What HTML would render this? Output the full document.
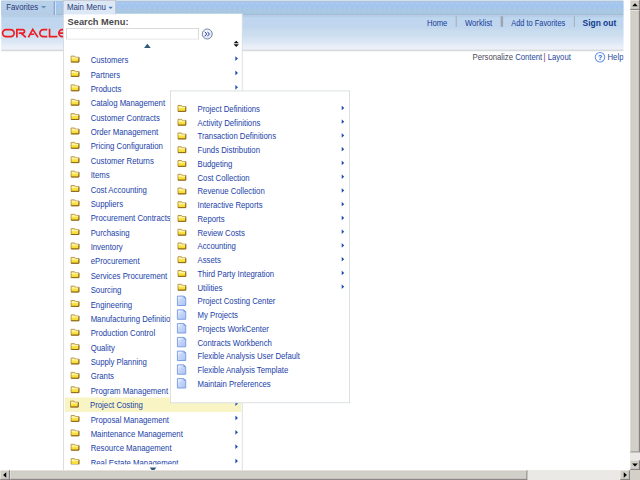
<!DOCTYPE html>
<html><head><meta charset="utf-8"><style>
html,body{margin:0;padding:0;width:640px;height:480px;overflow:hidden;background:#fff;}
#s{position:absolute;left:0;top:0;width:1024px;height:768px;transform:scale(0.625);transform-origin:0 0;overflow:hidden;background:#fff;font-family:"Liberation Sans",sans-serif;}
.a{position:absolute;}
.t{position:absolute;white-space:nowrap;}
.sb{position:absolute;background:#d0d0c8;box-shadow:inset -1px -1px 0 #787070, inset 1px 1px 0 #f4ecec, inset -2px -2px 0 #a49c9c, inset 2px 2px 0 #c8c0b4;}
</style></head><body>
<svg width="0" height="0" style="position:absolute"><defs><linearGradient id="fg" x1="0" y1="0" x2="0" y2="1"><stop offset="0" stop-color="#fff8b0"/><stop offset="0.5" stop-color="#fae640"/><stop offset="1" stop-color="#f2d830"/></linearGradient><linearGradient id="dg" x1="0" y1="0" x2="1" y2="1"><stop offset="0" stop-color="#ffffff"/><stop offset="0.45" stop-color="#c8d8f8"/><stop offset="1" stop-color="#a8c0f0"/></linearGradient><radialGradient id="bg1" cx="0.4" cy="0.35" r="0.7"><stop offset="0" stop-color="#ffffff"/><stop offset="1" stop-color="#d8e4f4"/></radialGradient></defs></svg>
<div id="s">
<div class="a" style="left:2.00px;top:0.00px;width:996.00px;height:24.50px;background:linear-gradient(#d0e0ee 0,#d0e0ee 1.8px,#b2c4d8 1.8px,#a8c4e6 3.5px,#a2c6f0 5px,#a4c6ee 12px,#a8c8e2 15px,#a8c8e2 23px,#a0bcd8 23px)"></div>
<div class="a" style="left:2.00px;top:24.50px;width:996.00px;height:57.50px;background:linear-gradient(#a8c2dc 0,#b8d0ea 1.6px,#bed6ee 4px,#c0d6ee 18px,#c8dcee 24px,#cddfef 32px,#d8e4f4 38px,#dee8f5 44px,#e8eef8 48px,#ecf1f9 53px,#e2e6ea 54.5px,#d6dadd 55.5px,#d6dadd 57.5px)"></div>
<div class="a" style="left:2.00px;top:4.60px;width:996.00px;height:1.80px;background:repeating-linear-gradient(90deg,#b2d0f0 0 5px,#a6c4ea 5px 8px)"></div>
<div class="a" style="left:2.00px;top:9.60px;width:996.00px;height:2.00px;background:repeating-linear-gradient(90deg,#a6bcec 0 3px,#a4c8f0 3px 8px)"></div>
<div class="a" style="left:2.00px;top:15.40px;width:996.00px;height:2.00px;background:repeating-linear-gradient(90deg,#a8c0e4 0 3px,#accae4 3px 8px)"></div>
<div class="a" style="left:2.00px;top:1.80px;width:84.00px;height:22.20px;background:linear-gradient(#bad2ea,#b4cce6)"></div>
<div class="a" style="left:86.00px;top:2.00px;width:1.60px;height:22.00px;background:#86a8d2"></div>
<div class="a" style="left:87.60px;top:2.00px;width:1.60px;height:22.00px;background:#eef4fa"></div>
<div class="t" style="left:10.00px;top:5.23px;font-size:13.2px;line-height:13.2px;color:#2a3a78;font-weight:normal;transform:scaleX(0.94);transform-origin:0 0;">Favorites</div>
<svg class="a" style="left:64px;top:8px" width="12" height="8"><path d="M1.5 1.5 L10 1.5 L5.75 5.5 Z" fill="#6692c2"/></svg>
<svg class="a" style="left:0;top:0" width="110" height="70"><g fill="none" stroke="#ee1c25" stroke-width="2.7">
<path d="M9.8 47.3 H17 A5.7 5.7 0 0 1 17 58.7 H9.8 A5.7 5.7 0 0 1 9.8 47.3 Z"/>
<path d="M27 60 V47.3 H36.4 A2.85 2.85 0 0 1 36.4 53 H30 M33.8 53 L41.4 59.8"/>
<path d="M45.4 59.8 L52.4 47 L60.8 59.8 M49.2 54.8 H54.6"/>
<path d="M75.6 47.3 H69.4 A5.7 5.7 0 0 0 69.4 58.7 H75.6"/>
<path d="M79.3 46 V58.7 H91.8"/>
<path d="M104 47.3 H99.8 A5.7 5.7 0 0 0 99.8 58.7 H104 M95 53 H104"/></g></svg>
<div class="t" style="left:683.00px;top:30.63px;font-size:13.2px;line-height:13.2px;color:#163c98;font-weight:normal;transform:scaleX(0.93);transform-origin:0 0;">Home</div>
<div class="a" style="left:729.00px;top:26.00px;width:2.00px;height:17.00px;background:#a8b4c4"></div>
<div class="t" style="left:743.50px;top:30.63px;font-size:13.2px;line-height:13.2px;color:#163c98;font-weight:normal;transform:scaleX(0.93);transform-origin:0 0;">Worklist</div>
<div class="a" style="left:801.00px;top:26.00px;width:3.60px;height:17.00px;background:#a0a4b0"></div>
<div class="t" style="left:818.00px;top:30.63px;font-size:13.2px;line-height:13.2px;color:#163c98;font-weight:normal;transform:scaleX(0.9);transform-origin:0 0;">Add to Favorites</div>
<div class="a" style="left:918.00px;top:26.00px;width:2.00px;height:17.00px;background:#a8b4c4"></div>
<div class="t" style="left:932.00px;top:30.37px;font-size:13.5px;line-height:13.5px;color:#0f3a8c;font-weight:bold;">Sign out</div>
<div class="t" style="left:756.00px;top:85.03px;font-size:13.2px;line-height:13.2px;color:#4a4a5a;font-weight:normal;transform:scaleX(0.94);transform-origin:0 0;">Personalize <span style="color:#26489a">Content</span> <span style="color:#8a3050;margin-left:-1.7px">|</span> <span style="color:#26489a">Layout</span></div>
<svg class="a" style="left:950px;top:82px" width="20" height="20"><circle cx="10" cy="9.6" r="7.6" fill="#f8fbff" stroke="#6a94e4" stroke-width="1.7"/><text x="10" y="14" text-anchor="middle" font-size="11" font-weight="bold" fill="#2a5ec8" font-family="Liberation Sans">?</text></svg>
<div class="t" style="left:972.00px;top:85.03px;font-size:13.2px;line-height:13.2px;color:#26489a;font-weight:normal;transform:scaleX(0.94);transform-origin:0 0;">Help</div>
<div class="a" style="left:101.00px;top:22.00px;width:287.00px;height:760.00px;background:#fff;border-left:1.6px solid #c2c8ce;border-right:1.6px solid #c8d0d4;box-sizing:border-box"></div>
<div class="a" style="left:101.00px;top:0.00px;width:84.00px;height:23.00px;background:#dce8f6;border:1.6px solid #bdbcc4;border-bottom:none;box-sizing:border-box"></div>
<div class="t" style="left:107.20px;top:5.23px;font-size:13.2px;line-height:13.2px;color:#2a3a78;font-weight:normal;transform:scaleX(0.96);transform-origin:0 0;">Main Menu</div>
<svg class="a" style="left:173px;top:10px" width="10" height="6"><path d="M0.5 0.8 L7.5 0.8 L4 4.5 Z" fill="#3a72c0"/></svg>
<div class="t" style="left:107.80px;top:26.88px;font-size:15.5px;line-height:15.5px;color:#4a4a4a;font-weight:bold;transform:scaleX(0.96);transform-origin:0 0;">Search Menu:</div>
<div class="a" style="left:105.60px;top:44.80px;width:212.00px;height:18.40px;border:1.6px solid #c4c4c4;border-bottom-color:#d8d8d8;box-sizing:border-box;background:#fff"></div>
<svg class="a" style="left:320px;top:42px" width="24" height="24"><circle cx="11.6" cy="12.4" r="8" fill="url(#bg1)" stroke="#7a86a0" stroke-width="1.6"/><path d="M7.6 8.8 L10.8 12.4 L7.6 16 M11.8 8.8 L15 12.4 L11.8 16" fill="none" stroke="#2a3aa8" stroke-width="1.6"/></svg>
<svg class="a" style="left:372px;top:64px" width="12" height="13"><path d="M1.8 5.2 L6 1 L10.2 5.2 Z M1.8 6.8 L6 11 L10.2 6.8 Z" fill="#111"/></svg>
<svg class="a" style="left:229px;top:68px" width="14" height="10"><path d="M1.5 8.6 L6.8 1.8 L12.2 8.6 Z" fill="#2e5a78"/></svg>
<svg class="a" style="left:112.00px;top:88.00px" width="16" height="13" viewBox="0 0 16 13"><path d="M1.8 1.8 H7.4 L8.4 3.6 H14.2 V11.2 H1.8 Z" fill="url(#fg)" stroke="#b89040" stroke-width="1.5" stroke-linejoin="round"/><path d="M14.2 3.6 V11.2 H1.8" fill="none" stroke="#8a6418" stroke-width="1.5" stroke-linejoin="round"/><path d="M2.6 4.8 H13.4" stroke="#fffce0" stroke-width="1.1"/></svg>
<div class="t" style="left:145.40px;top:89.78px;font-size:13.2px;line-height:13.2px;color:#1a42a8;font-weight:normal;transform:scaleX(0.945);transform-origin:0 0;">Customers</div>
<svg class="a" style="left:375.50px;top:89.40px" width="6" height="10"><path d="M0.6 0.8 L4.7 4.6 L0.6 8.4 Z" fill="#1a4cac"/></svg>
<svg class="a" style="left:112.00px;top:111.00px" width="16" height="13" viewBox="0 0 16 13"><path d="M1.8 1.8 H7.4 L8.4 3.6 H14.2 V11.2 H1.8 Z" fill="url(#fg)" stroke="#b89040" stroke-width="1.5" stroke-linejoin="round"/><path d="M14.2 3.6 V11.2 H1.8" fill="none" stroke="#8a6418" stroke-width="1.5" stroke-linejoin="round"/><path d="M2.6 4.8 H13.4" stroke="#fffce0" stroke-width="1.1"/></svg>
<div class="t" style="left:145.40px;top:112.78px;font-size:13.2px;line-height:13.2px;color:#1a42a8;font-weight:normal;transform:scaleX(0.945);transform-origin:0 0;">Partners</div>
<svg class="a" style="left:375.50px;top:112.40px" width="6" height="10"><path d="M0.6 0.8 L4.7 4.6 L0.6 8.4 Z" fill="#1a4cac"/></svg>
<svg class="a" style="left:112.00px;top:134.00px" width="16" height="13" viewBox="0 0 16 13"><path d="M1.8 1.8 H7.4 L8.4 3.6 H14.2 V11.2 H1.8 Z" fill="url(#fg)" stroke="#b89040" stroke-width="1.5" stroke-linejoin="round"/><path d="M14.2 3.6 V11.2 H1.8" fill="none" stroke="#8a6418" stroke-width="1.5" stroke-linejoin="round"/><path d="M2.6 4.8 H13.4" stroke="#fffce0" stroke-width="1.1"/></svg>
<div class="t" style="left:145.40px;top:135.78px;font-size:13.2px;line-height:13.2px;color:#1a42a8;font-weight:normal;transform:scaleX(0.945);transform-origin:0 0;">Products</div>
<svg class="a" style="left:375.50px;top:135.40px" width="6" height="10"><path d="M0.6 0.8 L4.7 4.6 L0.6 8.4 Z" fill="#1a4cac"/></svg>
<svg class="a" style="left:112.00px;top:157.00px" width="16" height="13" viewBox="0 0 16 13"><path d="M1.8 1.8 H7.4 L8.4 3.6 H14.2 V11.2 H1.8 Z" fill="url(#fg)" stroke="#b89040" stroke-width="1.5" stroke-linejoin="round"/><path d="M14.2 3.6 V11.2 H1.8" fill="none" stroke="#8a6418" stroke-width="1.5" stroke-linejoin="round"/><path d="M2.6 4.8 H13.4" stroke="#fffce0" stroke-width="1.1"/></svg>
<div class="t" style="left:145.40px;top:158.78px;font-size:13.2px;line-height:13.2px;color:#1a42a8;font-weight:normal;transform:scaleX(0.945);transform-origin:0 0;">Catalog Management</div>
<svg class="a" style="left:375.50px;top:158.40px" width="6" height="10"><path d="M0.6 0.8 L4.7 4.6 L0.6 8.4 Z" fill="#1a4cac"/></svg>
<svg class="a" style="left:112.00px;top:180.00px" width="16" height="13" viewBox="0 0 16 13"><path d="M1.8 1.8 H7.4 L8.4 3.6 H14.2 V11.2 H1.8 Z" fill="url(#fg)" stroke="#b89040" stroke-width="1.5" stroke-linejoin="round"/><path d="M14.2 3.6 V11.2 H1.8" fill="none" stroke="#8a6418" stroke-width="1.5" stroke-linejoin="round"/><path d="M2.6 4.8 H13.4" stroke="#fffce0" stroke-width="1.1"/></svg>
<div class="t" style="left:145.40px;top:181.78px;font-size:13.2px;line-height:13.2px;color:#1a42a8;font-weight:normal;transform:scaleX(0.945);transform-origin:0 0;">Customer Contracts</div>
<svg class="a" style="left:375.50px;top:181.40px" width="6" height="10"><path d="M0.6 0.8 L4.7 4.6 L0.6 8.4 Z" fill="#1a4cac"/></svg>
<svg class="a" style="left:112.00px;top:203.00px" width="16" height="13" viewBox="0 0 16 13"><path d="M1.8 1.8 H7.4 L8.4 3.6 H14.2 V11.2 H1.8 Z" fill="url(#fg)" stroke="#b89040" stroke-width="1.5" stroke-linejoin="round"/><path d="M14.2 3.6 V11.2 H1.8" fill="none" stroke="#8a6418" stroke-width="1.5" stroke-linejoin="round"/><path d="M2.6 4.8 H13.4" stroke="#fffce0" stroke-width="1.1"/></svg>
<div class="t" style="left:145.40px;top:204.78px;font-size:13.2px;line-height:13.2px;color:#1a42a8;font-weight:normal;transform:scaleX(0.945);transform-origin:0 0;">Order Management</div>
<svg class="a" style="left:375.50px;top:204.40px" width="6" height="10"><path d="M0.6 0.8 L4.7 4.6 L0.6 8.4 Z" fill="#1a4cac"/></svg>
<svg class="a" style="left:112.00px;top:226.00px" width="16" height="13" viewBox="0 0 16 13"><path d="M1.8 1.8 H7.4 L8.4 3.6 H14.2 V11.2 H1.8 Z" fill="url(#fg)" stroke="#b89040" stroke-width="1.5" stroke-linejoin="round"/><path d="M14.2 3.6 V11.2 H1.8" fill="none" stroke="#8a6418" stroke-width="1.5" stroke-linejoin="round"/><path d="M2.6 4.8 H13.4" stroke="#fffce0" stroke-width="1.1"/></svg>
<div class="t" style="left:145.40px;top:227.78px;font-size:13.2px;line-height:13.2px;color:#1a42a8;font-weight:normal;transform:scaleX(0.945);transform-origin:0 0;">Pricing Configuration</div>
<svg class="a" style="left:375.50px;top:227.40px" width="6" height="10"><path d="M0.6 0.8 L4.7 4.6 L0.6 8.4 Z" fill="#1a4cac"/></svg>
<svg class="a" style="left:112.00px;top:249.00px" width="16" height="13" viewBox="0 0 16 13"><path d="M1.8 1.8 H7.4 L8.4 3.6 H14.2 V11.2 H1.8 Z" fill="url(#fg)" stroke="#b89040" stroke-width="1.5" stroke-linejoin="round"/><path d="M14.2 3.6 V11.2 H1.8" fill="none" stroke="#8a6418" stroke-width="1.5" stroke-linejoin="round"/><path d="M2.6 4.8 H13.4" stroke="#fffce0" stroke-width="1.1"/></svg>
<div class="t" style="left:145.40px;top:250.78px;font-size:13.2px;line-height:13.2px;color:#1a42a8;font-weight:normal;transform:scaleX(0.945);transform-origin:0 0;">Customer Returns</div>
<svg class="a" style="left:375.50px;top:250.40px" width="6" height="10"><path d="M0.6 0.8 L4.7 4.6 L0.6 8.4 Z" fill="#1a4cac"/></svg>
<svg class="a" style="left:112.00px;top:272.00px" width="16" height="13" viewBox="0 0 16 13"><path d="M1.8 1.8 H7.4 L8.4 3.6 H14.2 V11.2 H1.8 Z" fill="url(#fg)" stroke="#b89040" stroke-width="1.5" stroke-linejoin="round"/><path d="M14.2 3.6 V11.2 H1.8" fill="none" stroke="#8a6418" stroke-width="1.5" stroke-linejoin="round"/><path d="M2.6 4.8 H13.4" stroke="#fffce0" stroke-width="1.1"/></svg>
<div class="t" style="left:145.40px;top:273.78px;font-size:13.2px;line-height:13.2px;color:#1a42a8;font-weight:normal;transform:scaleX(0.945);transform-origin:0 0;">Items</div>
<svg class="a" style="left:375.50px;top:273.40px" width="6" height="10"><path d="M0.6 0.8 L4.7 4.6 L0.6 8.4 Z" fill="#1a4cac"/></svg>
<svg class="a" style="left:112.00px;top:295.00px" width="16" height="13" viewBox="0 0 16 13"><path d="M1.8 1.8 H7.4 L8.4 3.6 H14.2 V11.2 H1.8 Z" fill="url(#fg)" stroke="#b89040" stroke-width="1.5" stroke-linejoin="round"/><path d="M14.2 3.6 V11.2 H1.8" fill="none" stroke="#8a6418" stroke-width="1.5" stroke-linejoin="round"/><path d="M2.6 4.8 H13.4" stroke="#fffce0" stroke-width="1.1"/></svg>
<div class="t" style="left:145.40px;top:296.78px;font-size:13.2px;line-height:13.2px;color:#1a42a8;font-weight:normal;transform:scaleX(0.945);transform-origin:0 0;">Cost Accounting</div>
<svg class="a" style="left:375.50px;top:296.40px" width="6" height="10"><path d="M0.6 0.8 L4.7 4.6 L0.6 8.4 Z" fill="#1a4cac"/></svg>
<svg class="a" style="left:112.00px;top:318.00px" width="16" height="13" viewBox="0 0 16 13"><path d="M1.8 1.8 H7.4 L8.4 3.6 H14.2 V11.2 H1.8 Z" fill="url(#fg)" stroke="#b89040" stroke-width="1.5" stroke-linejoin="round"/><path d="M14.2 3.6 V11.2 H1.8" fill="none" stroke="#8a6418" stroke-width="1.5" stroke-linejoin="round"/><path d="M2.6 4.8 H13.4" stroke="#fffce0" stroke-width="1.1"/></svg>
<div class="t" style="left:145.40px;top:319.78px;font-size:13.2px;line-height:13.2px;color:#1a42a8;font-weight:normal;transform:scaleX(0.945);transform-origin:0 0;">Suppliers</div>
<svg class="a" style="left:375.50px;top:319.40px" width="6" height="10"><path d="M0.6 0.8 L4.7 4.6 L0.6 8.4 Z" fill="#1a4cac"/></svg>
<svg class="a" style="left:112.00px;top:341.00px" width="16" height="13" viewBox="0 0 16 13"><path d="M1.8 1.8 H7.4 L8.4 3.6 H14.2 V11.2 H1.8 Z" fill="url(#fg)" stroke="#b89040" stroke-width="1.5" stroke-linejoin="round"/><path d="M14.2 3.6 V11.2 H1.8" fill="none" stroke="#8a6418" stroke-width="1.5" stroke-linejoin="round"/><path d="M2.6 4.8 H13.4" stroke="#fffce0" stroke-width="1.1"/></svg>
<div class="t" style="left:145.40px;top:342.78px;font-size:13.2px;line-height:13.2px;color:#1a42a8;font-weight:normal;transform:scaleX(0.945);transform-origin:0 0;">Procurement Contracts</div>
<svg class="a" style="left:375.50px;top:342.40px" width="6" height="10"><path d="M0.6 0.8 L4.7 4.6 L0.6 8.4 Z" fill="#1a4cac"/></svg>
<svg class="a" style="left:112.00px;top:364.00px" width="16" height="13" viewBox="0 0 16 13"><path d="M1.8 1.8 H7.4 L8.4 3.6 H14.2 V11.2 H1.8 Z" fill="url(#fg)" stroke="#b89040" stroke-width="1.5" stroke-linejoin="round"/><path d="M14.2 3.6 V11.2 H1.8" fill="none" stroke="#8a6418" stroke-width="1.5" stroke-linejoin="round"/><path d="M2.6 4.8 H13.4" stroke="#fffce0" stroke-width="1.1"/></svg>
<div class="t" style="left:145.40px;top:365.78px;font-size:13.2px;line-height:13.2px;color:#1a42a8;font-weight:normal;transform:scaleX(0.945);transform-origin:0 0;">Purchasing</div>
<svg class="a" style="left:375.50px;top:365.40px" width="6" height="10"><path d="M0.6 0.8 L4.7 4.6 L0.6 8.4 Z" fill="#1a4cac"/></svg>
<svg class="a" style="left:112.00px;top:387.00px" width="16" height="13" viewBox="0 0 16 13"><path d="M1.8 1.8 H7.4 L8.4 3.6 H14.2 V11.2 H1.8 Z" fill="url(#fg)" stroke="#b89040" stroke-width="1.5" stroke-linejoin="round"/><path d="M14.2 3.6 V11.2 H1.8" fill="none" stroke="#8a6418" stroke-width="1.5" stroke-linejoin="round"/><path d="M2.6 4.8 H13.4" stroke="#fffce0" stroke-width="1.1"/></svg>
<div class="t" style="left:145.40px;top:388.78px;font-size:13.2px;line-height:13.2px;color:#1a42a8;font-weight:normal;transform:scaleX(0.945);transform-origin:0 0;">Inventory</div>
<svg class="a" style="left:375.50px;top:388.40px" width="6" height="10"><path d="M0.6 0.8 L4.7 4.6 L0.6 8.4 Z" fill="#1a4cac"/></svg>
<svg class="a" style="left:112.00px;top:410.00px" width="16" height="13" viewBox="0 0 16 13"><path d="M1.8 1.8 H7.4 L8.4 3.6 H14.2 V11.2 H1.8 Z" fill="url(#fg)" stroke="#b89040" stroke-width="1.5" stroke-linejoin="round"/><path d="M14.2 3.6 V11.2 H1.8" fill="none" stroke="#8a6418" stroke-width="1.5" stroke-linejoin="round"/><path d="M2.6 4.8 H13.4" stroke="#fffce0" stroke-width="1.1"/></svg>
<div class="t" style="left:145.40px;top:411.78px;font-size:13.2px;line-height:13.2px;color:#1a42a8;font-weight:normal;transform:scaleX(0.945);transform-origin:0 0;">eProcurement</div>
<svg class="a" style="left:375.50px;top:411.40px" width="6" height="10"><path d="M0.6 0.8 L4.7 4.6 L0.6 8.4 Z" fill="#1a4cac"/></svg>
<svg class="a" style="left:112.00px;top:433.00px" width="16" height="13" viewBox="0 0 16 13"><path d="M1.8 1.8 H7.4 L8.4 3.6 H14.2 V11.2 H1.8 Z" fill="url(#fg)" stroke="#b89040" stroke-width="1.5" stroke-linejoin="round"/><path d="M14.2 3.6 V11.2 H1.8" fill="none" stroke="#8a6418" stroke-width="1.5" stroke-linejoin="round"/><path d="M2.6 4.8 H13.4" stroke="#fffce0" stroke-width="1.1"/></svg>
<div class="t" style="left:145.40px;top:434.78px;font-size:13.2px;line-height:13.2px;color:#1a42a8;font-weight:normal;transform:scaleX(0.945);transform-origin:0 0;">Services Procurement</div>
<svg class="a" style="left:375.50px;top:434.40px" width="6" height="10"><path d="M0.6 0.8 L4.7 4.6 L0.6 8.4 Z" fill="#1a4cac"/></svg>
<svg class="a" style="left:112.00px;top:456.00px" width="16" height="13" viewBox="0 0 16 13"><path d="M1.8 1.8 H7.4 L8.4 3.6 H14.2 V11.2 H1.8 Z" fill="url(#fg)" stroke="#b89040" stroke-width="1.5" stroke-linejoin="round"/><path d="M14.2 3.6 V11.2 H1.8" fill="none" stroke="#8a6418" stroke-width="1.5" stroke-linejoin="round"/><path d="M2.6 4.8 H13.4" stroke="#fffce0" stroke-width="1.1"/></svg>
<div class="t" style="left:145.40px;top:457.78px;font-size:13.2px;line-height:13.2px;color:#1a42a8;font-weight:normal;transform:scaleX(0.945);transform-origin:0 0;">Sourcing</div>
<svg class="a" style="left:375.50px;top:457.40px" width="6" height="10"><path d="M0.6 0.8 L4.7 4.6 L0.6 8.4 Z" fill="#1a4cac"/></svg>
<svg class="a" style="left:112.00px;top:479.00px" width="16" height="13" viewBox="0 0 16 13"><path d="M1.8 1.8 H7.4 L8.4 3.6 H14.2 V11.2 H1.8 Z" fill="url(#fg)" stroke="#b89040" stroke-width="1.5" stroke-linejoin="round"/><path d="M14.2 3.6 V11.2 H1.8" fill="none" stroke="#8a6418" stroke-width="1.5" stroke-linejoin="round"/><path d="M2.6 4.8 H13.4" stroke="#fffce0" stroke-width="1.1"/></svg>
<div class="t" style="left:145.40px;top:480.78px;font-size:13.2px;line-height:13.2px;color:#1a42a8;font-weight:normal;transform:scaleX(0.945);transform-origin:0 0;">Engineering</div>
<svg class="a" style="left:375.50px;top:480.40px" width="6" height="10"><path d="M0.6 0.8 L4.7 4.6 L0.6 8.4 Z" fill="#1a4cac"/></svg>
<svg class="a" style="left:112.00px;top:502.00px" width="16" height="13" viewBox="0 0 16 13"><path d="M1.8 1.8 H7.4 L8.4 3.6 H14.2 V11.2 H1.8 Z" fill="url(#fg)" stroke="#b89040" stroke-width="1.5" stroke-linejoin="round"/><path d="M14.2 3.6 V11.2 H1.8" fill="none" stroke="#8a6418" stroke-width="1.5" stroke-linejoin="round"/><path d="M2.6 4.8 H13.4" stroke="#fffce0" stroke-width="1.1"/></svg>
<div class="t" style="left:145.40px;top:503.78px;font-size:13.2px;line-height:13.2px;color:#1a42a8;font-weight:normal;transform:scaleX(0.945);transform-origin:0 0;">Manufacturing Definitions</div>
<svg class="a" style="left:375.50px;top:503.40px" width="6" height="10"><path d="M0.6 0.8 L4.7 4.6 L0.6 8.4 Z" fill="#1a4cac"/></svg>
<svg class="a" style="left:112.00px;top:525.00px" width="16" height="13" viewBox="0 0 16 13"><path d="M1.8 1.8 H7.4 L8.4 3.6 H14.2 V11.2 H1.8 Z" fill="url(#fg)" stroke="#b89040" stroke-width="1.5" stroke-linejoin="round"/><path d="M14.2 3.6 V11.2 H1.8" fill="none" stroke="#8a6418" stroke-width="1.5" stroke-linejoin="round"/><path d="M2.6 4.8 H13.4" stroke="#fffce0" stroke-width="1.1"/></svg>
<div class="t" style="left:145.40px;top:526.78px;font-size:13.2px;line-height:13.2px;color:#1a42a8;font-weight:normal;transform:scaleX(0.945);transform-origin:0 0;">Production Control</div>
<svg class="a" style="left:375.50px;top:526.40px" width="6" height="10"><path d="M0.6 0.8 L4.7 4.6 L0.6 8.4 Z" fill="#1a4cac"/></svg>
<svg class="a" style="left:112.00px;top:548.00px" width="16" height="13" viewBox="0 0 16 13"><path d="M1.8 1.8 H7.4 L8.4 3.6 H14.2 V11.2 H1.8 Z" fill="url(#fg)" stroke="#b89040" stroke-width="1.5" stroke-linejoin="round"/><path d="M14.2 3.6 V11.2 H1.8" fill="none" stroke="#8a6418" stroke-width="1.5" stroke-linejoin="round"/><path d="M2.6 4.8 H13.4" stroke="#fffce0" stroke-width="1.1"/></svg>
<div class="t" style="left:145.40px;top:549.78px;font-size:13.2px;line-height:13.2px;color:#1a42a8;font-weight:normal;transform:scaleX(0.945);transform-origin:0 0;">Quality</div>
<svg class="a" style="left:375.50px;top:549.40px" width="6" height="10"><path d="M0.6 0.8 L4.7 4.6 L0.6 8.4 Z" fill="#1a4cac"/></svg>
<svg class="a" style="left:112.00px;top:571.00px" width="16" height="13" viewBox="0 0 16 13"><path d="M1.8 1.8 H7.4 L8.4 3.6 H14.2 V11.2 H1.8 Z" fill="url(#fg)" stroke="#b89040" stroke-width="1.5" stroke-linejoin="round"/><path d="M14.2 3.6 V11.2 H1.8" fill="none" stroke="#8a6418" stroke-width="1.5" stroke-linejoin="round"/><path d="M2.6 4.8 H13.4" stroke="#fffce0" stroke-width="1.1"/></svg>
<div class="t" style="left:145.40px;top:572.78px;font-size:13.2px;line-height:13.2px;color:#1a42a8;font-weight:normal;transform:scaleX(0.945);transform-origin:0 0;">Supply Planning</div>
<svg class="a" style="left:375.50px;top:572.40px" width="6" height="10"><path d="M0.6 0.8 L4.7 4.6 L0.6 8.4 Z" fill="#1a4cac"/></svg>
<svg class="a" style="left:112.00px;top:594.00px" width="16" height="13" viewBox="0 0 16 13"><path d="M1.8 1.8 H7.4 L8.4 3.6 H14.2 V11.2 H1.8 Z" fill="url(#fg)" stroke="#b89040" stroke-width="1.5" stroke-linejoin="round"/><path d="M14.2 3.6 V11.2 H1.8" fill="none" stroke="#8a6418" stroke-width="1.5" stroke-linejoin="round"/><path d="M2.6 4.8 H13.4" stroke="#fffce0" stroke-width="1.1"/></svg>
<div class="t" style="left:145.40px;top:595.78px;font-size:13.2px;line-height:13.2px;color:#1a42a8;font-weight:normal;transform:scaleX(0.945);transform-origin:0 0;">Grants</div>
<svg class="a" style="left:375.50px;top:595.40px" width="6" height="10"><path d="M0.6 0.8 L4.7 4.6 L0.6 8.4 Z" fill="#1a4cac"/></svg>
<svg class="a" style="left:112.00px;top:617.00px" width="16" height="13" viewBox="0 0 16 13"><path d="M1.8 1.8 H7.4 L8.4 3.6 H14.2 V11.2 H1.8 Z" fill="url(#fg)" stroke="#b89040" stroke-width="1.5" stroke-linejoin="round"/><path d="M14.2 3.6 V11.2 H1.8" fill="none" stroke="#8a6418" stroke-width="1.5" stroke-linejoin="round"/><path d="M2.6 4.8 H13.4" stroke="#fffce0" stroke-width="1.1"/></svg>
<div class="t" style="left:145.40px;top:618.78px;font-size:13.2px;line-height:13.2px;color:#1a42a8;font-weight:normal;transform:scaleX(0.945);transform-origin:0 0;">Program Management</div>
<svg class="a" style="left:375.50px;top:618.40px" width="6" height="10"><path d="M0.6 0.8 L4.7 4.6 L0.6 8.4 Z" fill="#1a4cac"/></svg>
<div class="a" style="left:104.00px;top:636.20px;width:281.60px;height:23.00px;background:#f8f4c4"></div>
<svg class="a" style="left:110.60px;top:640.00px" width="16" height="13" viewBox="0 0 16 13"><path d="M1.8 1.8 H7.4 L8.4 3.6 H14.2 V11.2 H1.8 Z" fill="url(#fg)" stroke="#b89040" stroke-width="1.5" stroke-linejoin="round"/><path d="M14.2 3.6 V11.2 H1.8" fill="none" stroke="#8a6418" stroke-width="1.5" stroke-linejoin="round"/><path d="M2.6 4.8 H13.4" stroke="#fffce0" stroke-width="1.1"/></svg>
<div class="t" style="left:144.00px;top:641.78px;font-size:13.2px;line-height:13.2px;color:#1a42a8;font-weight:normal;transform:scaleX(0.945);transform-origin:0 0;">Project Costing</div>
<svg class="a" style="left:375.50px;top:641.40px" width="6" height="10"><path d="M0.6 0.8 L4.7 4.6 L0.6 8.4 Z" fill="#1a4cac"/></svg>
<svg class="a" style="left:112.00px;top:663.00px" width="16" height="13" viewBox="0 0 16 13"><path d="M1.8 1.8 H7.4 L8.4 3.6 H14.2 V11.2 H1.8 Z" fill="url(#fg)" stroke="#b89040" stroke-width="1.5" stroke-linejoin="round"/><path d="M14.2 3.6 V11.2 H1.8" fill="none" stroke="#8a6418" stroke-width="1.5" stroke-linejoin="round"/><path d="M2.6 4.8 H13.4" stroke="#fffce0" stroke-width="1.1"/></svg>
<div class="t" style="left:145.40px;top:664.78px;font-size:13.2px;line-height:13.2px;color:#1a42a8;font-weight:normal;transform:scaleX(0.945);transform-origin:0 0;">Proposal Management</div>
<svg class="a" style="left:375.50px;top:664.40px" width="6" height="10"><path d="M0.6 0.8 L4.7 4.6 L0.6 8.4 Z" fill="#1a4cac"/></svg>
<svg class="a" style="left:112.00px;top:686.00px" width="16" height="13" viewBox="0 0 16 13"><path d="M1.8 1.8 H7.4 L8.4 3.6 H14.2 V11.2 H1.8 Z" fill="url(#fg)" stroke="#b89040" stroke-width="1.5" stroke-linejoin="round"/><path d="M14.2 3.6 V11.2 H1.8" fill="none" stroke="#8a6418" stroke-width="1.5" stroke-linejoin="round"/><path d="M2.6 4.8 H13.4" stroke="#fffce0" stroke-width="1.1"/></svg>
<div class="t" style="left:145.40px;top:687.78px;font-size:13.2px;line-height:13.2px;color:#1a42a8;font-weight:normal;transform:scaleX(0.945);transform-origin:0 0;">Maintenance Management</div>
<svg class="a" style="left:375.50px;top:687.40px" width="6" height="10"><path d="M0.6 0.8 L4.7 4.6 L0.6 8.4 Z" fill="#1a4cac"/></svg>
<svg class="a" style="left:112.00px;top:709.00px" width="16" height="13" viewBox="0 0 16 13"><path d="M1.8 1.8 H7.4 L8.4 3.6 H14.2 V11.2 H1.8 Z" fill="url(#fg)" stroke="#b89040" stroke-width="1.5" stroke-linejoin="round"/><path d="M14.2 3.6 V11.2 H1.8" fill="none" stroke="#8a6418" stroke-width="1.5" stroke-linejoin="round"/><path d="M2.6 4.8 H13.4" stroke="#fffce0" stroke-width="1.1"/></svg>
<div class="t" style="left:145.40px;top:710.78px;font-size:13.2px;line-height:13.2px;color:#1a42a8;font-weight:normal;transform:scaleX(0.945);transform-origin:0 0;">Resource Management</div>
<svg class="a" style="left:375.50px;top:710.40px" width="6" height="10"><path d="M0.6 0.8 L4.7 4.6 L0.6 8.4 Z" fill="#1a4cac"/></svg>
<svg class="a" style="left:112.00px;top:732.00px" width="16" height="13" viewBox="0 0 16 13"><path d="M1.8 1.8 H7.4 L8.4 3.6 H14.2 V11.2 H1.8 Z" fill="url(#fg)" stroke="#b89040" stroke-width="1.5" stroke-linejoin="round"/><path d="M14.2 3.6 V11.2 H1.8" fill="none" stroke="#8a6418" stroke-width="1.5" stroke-linejoin="round"/><path d="M2.6 4.8 H13.4" stroke="#fffce0" stroke-width="1.1"/></svg>
<div class="t" style="left:145.40px;top:733.78px;font-size:13.2px;line-height:13.2px;color:#1a42a8;font-weight:normal;transform:scaleX(0.945);transform-origin:0 0;">Real Estate Management</div>
<svg class="a" style="left:375.50px;top:733.40px" width="6" height="10"><path d="M0.6 0.8 L4.7 4.6 L0.6 8.4 Z" fill="#1a4cac"/></svg>
<div class="a" style="left:102.60px;top:743.40px;width:282.00px;height:9.00px;background:#fff"></div>
<svg class="a" style="left:238px;top:746px" width="14" height="8"><path d="M1.5 1.8 L12.2 1.8 L6.8 8.6 Z" fill="#2e5a78"/></svg>
<div class="a" style="left:272.00px;top:145.00px;width:288.00px;height:500.00px;background:#fff;border:1.6px solid #c6ced2;box-sizing:border-box"></div>
<svg class="a" style="left:282.80px;top:166.80px" width="16" height="13" viewBox="0 0 16 13"><path d="M1.8 1.8 H7.4 L8.4 3.6 H14.2 V11.2 H1.8 Z" fill="url(#fg)" stroke="#b89040" stroke-width="1.5" stroke-linejoin="round"/><path d="M14.2 3.6 V11.2 H1.8" fill="none" stroke="#8a6418" stroke-width="1.5" stroke-linejoin="round"/><path d="M2.6 4.8 H13.4" stroke="#fffce0" stroke-width="1.1"/></svg>
<svg class="a" style="left:546.00px;top:167.70px" width="6" height="10"><path d="M0.6 0.8 L4.7 4.6 L0.6 8.4 Z" fill="#1a4cac"/></svg>
<div class="t" style="left:316.00px;top:167.57px;font-size:13.2px;line-height:13.2px;color:#1a42a8;font-weight:normal;transform:scaleX(0.94);transform-origin:0 0;">Project Definitions</div>
<svg class="a" style="left:282.80px;top:188.80px" width="16" height="13" viewBox="0 0 16 13"><path d="M1.8 1.8 H7.4 L8.4 3.6 H14.2 V11.2 H1.8 Z" fill="url(#fg)" stroke="#b89040" stroke-width="1.5" stroke-linejoin="round"/><path d="M14.2 3.6 V11.2 H1.8" fill="none" stroke="#8a6418" stroke-width="1.5" stroke-linejoin="round"/><path d="M2.6 4.8 H13.4" stroke="#fffce0" stroke-width="1.1"/></svg>
<svg class="a" style="left:546.00px;top:189.70px" width="6" height="10"><path d="M0.6 0.8 L4.7 4.6 L0.6 8.4 Z" fill="#1a4cac"/></svg>
<div class="t" style="left:316.00px;top:189.57px;font-size:13.2px;line-height:13.2px;color:#1a42a8;font-weight:normal;transform:scaleX(0.94);transform-origin:0 0;">Activity Definitions</div>
<svg class="a" style="left:282.80px;top:210.80px" width="16" height="13" viewBox="0 0 16 13"><path d="M1.8 1.8 H7.4 L8.4 3.6 H14.2 V11.2 H1.8 Z" fill="url(#fg)" stroke="#b89040" stroke-width="1.5" stroke-linejoin="round"/><path d="M14.2 3.6 V11.2 H1.8" fill="none" stroke="#8a6418" stroke-width="1.5" stroke-linejoin="round"/><path d="M2.6 4.8 H13.4" stroke="#fffce0" stroke-width="1.1"/></svg>
<svg class="a" style="left:546.00px;top:211.70px" width="6" height="10"><path d="M0.6 0.8 L4.7 4.6 L0.6 8.4 Z" fill="#1a4cac"/></svg>
<div class="t" style="left:316.00px;top:211.57px;font-size:13.2px;line-height:13.2px;color:#1a42a8;font-weight:normal;transform:scaleX(0.94);transform-origin:0 0;">Transaction Definitions</div>
<svg class="a" style="left:282.80px;top:232.80px" width="16" height="13" viewBox="0 0 16 13"><path d="M1.8 1.8 H7.4 L8.4 3.6 H14.2 V11.2 H1.8 Z" fill="url(#fg)" stroke="#b89040" stroke-width="1.5" stroke-linejoin="round"/><path d="M14.2 3.6 V11.2 H1.8" fill="none" stroke="#8a6418" stroke-width="1.5" stroke-linejoin="round"/><path d="M2.6 4.8 H13.4" stroke="#fffce0" stroke-width="1.1"/></svg>
<svg class="a" style="left:546.00px;top:233.70px" width="6" height="10"><path d="M0.6 0.8 L4.7 4.6 L0.6 8.4 Z" fill="#1a4cac"/></svg>
<div class="t" style="left:316.00px;top:233.57px;font-size:13.2px;line-height:13.2px;color:#1a42a8;font-weight:normal;transform:scaleX(0.94);transform-origin:0 0;">Funds Distribution</div>
<svg class="a" style="left:282.80px;top:254.80px" width="16" height="13" viewBox="0 0 16 13"><path d="M1.8 1.8 H7.4 L8.4 3.6 H14.2 V11.2 H1.8 Z" fill="url(#fg)" stroke="#b89040" stroke-width="1.5" stroke-linejoin="round"/><path d="M14.2 3.6 V11.2 H1.8" fill="none" stroke="#8a6418" stroke-width="1.5" stroke-linejoin="round"/><path d="M2.6 4.8 H13.4" stroke="#fffce0" stroke-width="1.1"/></svg>
<svg class="a" style="left:546.00px;top:255.70px" width="6" height="10"><path d="M0.6 0.8 L4.7 4.6 L0.6 8.4 Z" fill="#1a4cac"/></svg>
<div class="t" style="left:316.00px;top:255.57px;font-size:13.2px;line-height:13.2px;color:#1a42a8;font-weight:normal;transform:scaleX(0.94);transform-origin:0 0;">Budgeting</div>
<svg class="a" style="left:282.80px;top:276.80px" width="16" height="13" viewBox="0 0 16 13"><path d="M1.8 1.8 H7.4 L8.4 3.6 H14.2 V11.2 H1.8 Z" fill="url(#fg)" stroke="#b89040" stroke-width="1.5" stroke-linejoin="round"/><path d="M14.2 3.6 V11.2 H1.8" fill="none" stroke="#8a6418" stroke-width="1.5" stroke-linejoin="round"/><path d="M2.6 4.8 H13.4" stroke="#fffce0" stroke-width="1.1"/></svg>
<svg class="a" style="left:546.00px;top:277.70px" width="6" height="10"><path d="M0.6 0.8 L4.7 4.6 L0.6 8.4 Z" fill="#1a4cac"/></svg>
<div class="t" style="left:316.00px;top:277.57px;font-size:13.2px;line-height:13.2px;color:#1a42a8;font-weight:normal;transform:scaleX(0.94);transform-origin:0 0;">Cost Collection</div>
<svg class="a" style="left:282.80px;top:298.80px" width="16" height="13" viewBox="0 0 16 13"><path d="M1.8 1.8 H7.4 L8.4 3.6 H14.2 V11.2 H1.8 Z" fill="url(#fg)" stroke="#b89040" stroke-width="1.5" stroke-linejoin="round"/><path d="M14.2 3.6 V11.2 H1.8" fill="none" stroke="#8a6418" stroke-width="1.5" stroke-linejoin="round"/><path d="M2.6 4.8 H13.4" stroke="#fffce0" stroke-width="1.1"/></svg>
<svg class="a" style="left:546.00px;top:299.70px" width="6" height="10"><path d="M0.6 0.8 L4.7 4.6 L0.6 8.4 Z" fill="#1a4cac"/></svg>
<div class="t" style="left:316.00px;top:299.57px;font-size:13.2px;line-height:13.2px;color:#1a42a8;font-weight:normal;transform:scaleX(0.94);transform-origin:0 0;">Revenue Collection</div>
<svg class="a" style="left:282.80px;top:320.80px" width="16" height="13" viewBox="0 0 16 13"><path d="M1.8 1.8 H7.4 L8.4 3.6 H14.2 V11.2 H1.8 Z" fill="url(#fg)" stroke="#b89040" stroke-width="1.5" stroke-linejoin="round"/><path d="M14.2 3.6 V11.2 H1.8" fill="none" stroke="#8a6418" stroke-width="1.5" stroke-linejoin="round"/><path d="M2.6 4.8 H13.4" stroke="#fffce0" stroke-width="1.1"/></svg>
<svg class="a" style="left:546.00px;top:321.70px" width="6" height="10"><path d="M0.6 0.8 L4.7 4.6 L0.6 8.4 Z" fill="#1a4cac"/></svg>
<div class="t" style="left:316.00px;top:321.57px;font-size:13.2px;line-height:13.2px;color:#1a42a8;font-weight:normal;transform:scaleX(0.94);transform-origin:0 0;">Interactive Reports</div>
<svg class="a" style="left:282.80px;top:342.80px" width="16" height="13" viewBox="0 0 16 13"><path d="M1.8 1.8 H7.4 L8.4 3.6 H14.2 V11.2 H1.8 Z" fill="url(#fg)" stroke="#b89040" stroke-width="1.5" stroke-linejoin="round"/><path d="M14.2 3.6 V11.2 H1.8" fill="none" stroke="#8a6418" stroke-width="1.5" stroke-linejoin="round"/><path d="M2.6 4.8 H13.4" stroke="#fffce0" stroke-width="1.1"/></svg>
<svg class="a" style="left:546.00px;top:343.70px" width="6" height="10"><path d="M0.6 0.8 L4.7 4.6 L0.6 8.4 Z" fill="#1a4cac"/></svg>
<div class="t" style="left:316.00px;top:343.57px;font-size:13.2px;line-height:13.2px;color:#1a42a8;font-weight:normal;transform:scaleX(0.94);transform-origin:0 0;">Reports</div>
<svg class="a" style="left:282.80px;top:364.80px" width="16" height="13" viewBox="0 0 16 13"><path d="M1.8 1.8 H7.4 L8.4 3.6 H14.2 V11.2 H1.8 Z" fill="url(#fg)" stroke="#b89040" stroke-width="1.5" stroke-linejoin="round"/><path d="M14.2 3.6 V11.2 H1.8" fill="none" stroke="#8a6418" stroke-width="1.5" stroke-linejoin="round"/><path d="M2.6 4.8 H13.4" stroke="#fffce0" stroke-width="1.1"/></svg>
<svg class="a" style="left:546.00px;top:365.70px" width="6" height="10"><path d="M0.6 0.8 L4.7 4.6 L0.6 8.4 Z" fill="#1a4cac"/></svg>
<div class="t" style="left:316.00px;top:365.57px;font-size:13.2px;line-height:13.2px;color:#1a42a8;font-weight:normal;transform:scaleX(0.94);transform-origin:0 0;">Review Costs</div>
<svg class="a" style="left:282.80px;top:386.80px" width="16" height="13" viewBox="0 0 16 13"><path d="M1.8 1.8 H7.4 L8.4 3.6 H14.2 V11.2 H1.8 Z" fill="url(#fg)" stroke="#b89040" stroke-width="1.5" stroke-linejoin="round"/><path d="M14.2 3.6 V11.2 H1.8" fill="none" stroke="#8a6418" stroke-width="1.5" stroke-linejoin="round"/><path d="M2.6 4.8 H13.4" stroke="#fffce0" stroke-width="1.1"/></svg>
<svg class="a" style="left:546.00px;top:387.70px" width="6" height="10"><path d="M0.6 0.8 L4.7 4.6 L0.6 8.4 Z" fill="#1a4cac"/></svg>
<div class="t" style="left:316.00px;top:387.57px;font-size:13.2px;line-height:13.2px;color:#1a42a8;font-weight:normal;transform:scaleX(0.94);transform-origin:0 0;">Accounting</div>
<svg class="a" style="left:282.80px;top:408.80px" width="16" height="13" viewBox="0 0 16 13"><path d="M1.8 1.8 H7.4 L8.4 3.6 H14.2 V11.2 H1.8 Z" fill="url(#fg)" stroke="#b89040" stroke-width="1.5" stroke-linejoin="round"/><path d="M14.2 3.6 V11.2 H1.8" fill="none" stroke="#8a6418" stroke-width="1.5" stroke-linejoin="round"/><path d="M2.6 4.8 H13.4" stroke="#fffce0" stroke-width="1.1"/></svg>
<svg class="a" style="left:546.00px;top:409.70px" width="6" height="10"><path d="M0.6 0.8 L4.7 4.6 L0.6 8.4 Z" fill="#1a4cac"/></svg>
<div class="t" style="left:316.00px;top:409.57px;font-size:13.2px;line-height:13.2px;color:#1a42a8;font-weight:normal;transform:scaleX(0.94);transform-origin:0 0;">Assets</div>
<svg class="a" style="left:282.80px;top:430.80px" width="16" height="13" viewBox="0 0 16 13"><path d="M1.8 1.8 H7.4 L8.4 3.6 H14.2 V11.2 H1.8 Z" fill="url(#fg)" stroke="#b89040" stroke-width="1.5" stroke-linejoin="round"/><path d="M14.2 3.6 V11.2 H1.8" fill="none" stroke="#8a6418" stroke-width="1.5" stroke-linejoin="round"/><path d="M2.6 4.8 H13.4" stroke="#fffce0" stroke-width="1.1"/></svg>
<svg class="a" style="left:546.00px;top:431.70px" width="6" height="10"><path d="M0.6 0.8 L4.7 4.6 L0.6 8.4 Z" fill="#1a4cac"/></svg>
<div class="t" style="left:316.00px;top:431.57px;font-size:13.2px;line-height:13.2px;color:#1a42a8;font-weight:normal;transform:scaleX(0.94);transform-origin:0 0;">Third Party Integration</div>
<svg class="a" style="left:282.80px;top:452.80px" width="16" height="13" viewBox="0 0 16 13"><path d="M1.8 1.8 H7.4 L8.4 3.6 H14.2 V11.2 H1.8 Z" fill="url(#fg)" stroke="#b89040" stroke-width="1.5" stroke-linejoin="round"/><path d="M14.2 3.6 V11.2 H1.8" fill="none" stroke="#8a6418" stroke-width="1.5" stroke-linejoin="round"/><path d="M2.6 4.8 H13.4" stroke="#fffce0" stroke-width="1.1"/></svg>
<svg class="a" style="left:546.00px;top:453.70px" width="6" height="10"><path d="M0.6 0.8 L4.7 4.6 L0.6 8.4 Z" fill="#1a4cac"/></svg>
<div class="t" style="left:316.00px;top:453.57px;font-size:13.2px;line-height:13.2px;color:#1a42a8;font-weight:normal;transform:scaleX(0.94);transform-origin:0 0;">Utilities</div>
<svg class="a" style="left:282.20px;top:472.10px" width="17" height="19" viewBox="0 0 17 19"><path d="M1.8 1.8 H12.2 L15.2 4.8 V16.8 H1.8 Z" fill="url(#dg)" stroke="#7c9ee8" stroke-width="1.6" stroke-linejoin="round"/><path d="M12.2 1.8 V4.8 H15.2 Z" fill="#7c9ee8" stroke="#7c9ee8" stroke-width="1"/><path d="M4 7 H12 M4 9.5 H12 M4 12 H12" stroke="#b8ccf4" stroke-width="0.8"/></svg>
<div class="t" style="left:316.00px;top:475.57px;font-size:13.2px;line-height:13.2px;color:#1a42a8;font-weight:normal;transform:scaleX(0.94);transform-origin:0 0;">Project Costing Center</div>
<svg class="a" style="left:282.20px;top:494.10px" width="17" height="19" viewBox="0 0 17 19"><path d="M1.8 1.8 H12.2 L15.2 4.8 V16.8 H1.8 Z" fill="url(#dg)" stroke="#7c9ee8" stroke-width="1.6" stroke-linejoin="round"/><path d="M12.2 1.8 V4.8 H15.2 Z" fill="#7c9ee8" stroke="#7c9ee8" stroke-width="1"/><path d="M4 7 H12 M4 9.5 H12 M4 12 H12" stroke="#b8ccf4" stroke-width="0.8"/></svg>
<div class="t" style="left:316.00px;top:497.57px;font-size:13.2px;line-height:13.2px;color:#1a42a8;font-weight:normal;transform:scaleX(0.94);transform-origin:0 0;">My Projects</div>
<svg class="a" style="left:282.20px;top:516.10px" width="17" height="19" viewBox="0 0 17 19"><path d="M1.8 1.8 H12.2 L15.2 4.8 V16.8 H1.8 Z" fill="url(#dg)" stroke="#7c9ee8" stroke-width="1.6" stroke-linejoin="round"/><path d="M12.2 1.8 V4.8 H15.2 Z" fill="#7c9ee8" stroke="#7c9ee8" stroke-width="1"/><path d="M4 7 H12 M4 9.5 H12 M4 12 H12" stroke="#b8ccf4" stroke-width="0.8"/></svg>
<div class="t" style="left:316.00px;top:519.57px;font-size:13.2px;line-height:13.2px;color:#1a42a8;font-weight:normal;transform:scaleX(0.94);transform-origin:0 0;">Projects WorkCenter</div>
<svg class="a" style="left:282.20px;top:538.10px" width="17" height="19" viewBox="0 0 17 19"><path d="M1.8 1.8 H12.2 L15.2 4.8 V16.8 H1.8 Z" fill="url(#dg)" stroke="#7c9ee8" stroke-width="1.6" stroke-linejoin="round"/><path d="M12.2 1.8 V4.8 H15.2 Z" fill="#7c9ee8" stroke="#7c9ee8" stroke-width="1"/><path d="M4 7 H12 M4 9.5 H12 M4 12 H12" stroke="#b8ccf4" stroke-width="0.8"/></svg>
<div class="t" style="left:316.00px;top:541.57px;font-size:13.2px;line-height:13.2px;color:#1a42a8;font-weight:normal;transform:scaleX(0.94);transform-origin:0 0;">Contracts Workbench</div>
<svg class="a" style="left:282.20px;top:560.10px" width="17" height="19" viewBox="0 0 17 19"><path d="M1.8 1.8 H12.2 L15.2 4.8 V16.8 H1.8 Z" fill="url(#dg)" stroke="#7c9ee8" stroke-width="1.6" stroke-linejoin="round"/><path d="M12.2 1.8 V4.8 H15.2 Z" fill="#7c9ee8" stroke="#7c9ee8" stroke-width="1"/><path d="M4 7 H12 M4 9.5 H12 M4 12 H12" stroke="#b8ccf4" stroke-width="0.8"/></svg>
<div class="t" style="left:316.00px;top:563.57px;font-size:13.2px;line-height:13.2px;color:#1a42a8;font-weight:normal;transform:scaleX(0.94);transform-origin:0 0;">Flexible Analysis User Default</div>
<svg class="a" style="left:282.20px;top:582.10px" width="17" height="19" viewBox="0 0 17 19"><path d="M1.8 1.8 H12.2 L15.2 4.8 V16.8 H1.8 Z" fill="url(#dg)" stroke="#7c9ee8" stroke-width="1.6" stroke-linejoin="round"/><path d="M12.2 1.8 V4.8 H15.2 Z" fill="#7c9ee8" stroke="#7c9ee8" stroke-width="1"/><path d="M4 7 H12 M4 9.5 H12 M4 12 H12" stroke="#b8ccf4" stroke-width="0.8"/></svg>
<div class="t" style="left:316.00px;top:585.57px;font-size:13.2px;line-height:13.2px;color:#1a42a8;font-weight:normal;transform:scaleX(0.94);transform-origin:0 0;">Flexible Analysis Template</div>
<svg class="a" style="left:282.20px;top:604.10px" width="17" height="19" viewBox="0 0 17 19"><path d="M1.8 1.8 H12.2 L15.2 4.8 V16.8 H1.8 Z" fill="url(#dg)" stroke="#7c9ee8" stroke-width="1.6" stroke-linejoin="round"/><path d="M12.2 1.8 V4.8 H15.2 Z" fill="#7c9ee8" stroke="#7c9ee8" stroke-width="1"/><path d="M4 7 H12 M4 9.5 H12 M4 12 H12" stroke="#b8ccf4" stroke-width="0.8"/></svg>
<div class="t" style="left:316.00px;top:607.57px;font-size:13.2px;line-height:13.2px;color:#1a42a8;font-weight:normal;transform:scaleX(0.94);transform-origin:0 0;">Maintain Preferences</div>
<div class="a" style="left:998.00px;top:0.00px;width:10.00px;height:752.00px;background:#fff"></div>
<div class="sb" style="left:1008px;top:0;width:16px;height:16px"></div>
<svg class="a" style="left:1008px;top:0" width="16" height="16"><path d="M3.5 10 L8 5 L12.5 10 Z" fill="#000"/></svg>
<div class="sb" style="left:1008px;top:16px;width:16px;height:708px"></div>
<div class="a" style="left:1008.00px;top:724.00px;width:16.00px;height:12.00px;background:#ebe9e5"></div>
<div class="sb" style="left:1008px;top:736px;width:16px;height:16px"></div>
<svg class="a" style="left:1008px;top:736px" width="16" height="16"><path d="M3.5 5.5 L8 10.5 L12.5 5.5 Z" fill="#000"/></svg>
<div class="a" style="left:1008.00px;top:752.00px;width:16.00px;height:16.00px;background:#d4d0c8"></div>
<div class="sb" style="left:0;top:752px;width:16px;height:16px"></div>
<svg class="a" style="left:0;top:752px" width="16" height="16"><path d="M10 3.5 L5 8 L10 12.5 Z" fill="#000"/></svg>
<div class="sb" style="left:16px;top:752px;width:828px;height:16px"></div>
<div class="a" style="left:844.00px;top:752.00px;width:148.00px;height:16.00px;background:#ebe9e5"></div>
<div class="sb" style="left:992px;top:752px;width:16px;height:16px"></div>
<svg class="a" style="left:992px;top:752px" width="16" height="16"><path d="M6 3.5 L11 8 L6 12.5 Z" fill="#000"/></svg>
</div>
</body></html>
